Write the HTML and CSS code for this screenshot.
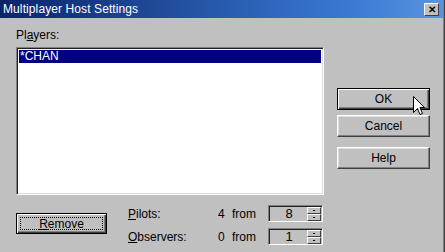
FILE: index.html
```html
<!DOCTYPE html>
<html lang="en">

<head>
    <meta charset="UTF-8">
    <title>Multiplayer Host Settings</title>
    <link rel="stylesheet" href="styles.css">
</head>

<body>

    <div class="window">
        <!-- Title bar -->
        <div class="titlebar">
            <span class="title">Multiplayer Host Settings</span>
            <span class="close-btn">&#x2715;</span>
        </div>

        <div class="content">
            <div class="left">
                <div class="label">Pl<u>a</u>yers:</div>
                <div class="listbox">
                    <div class="list-item selected">*CHAN</div>
                </div>

                <div class="bottom-row">
                    <div class="remove-wrap">
                        <button class="btn remove-btn"><span class="focus"><u>R</u>emove</span></button>
                    </div>
                    <div class="counts">
                        <div class="count-row">
                            <span class="count-label"><u>P</u>ilots:</span>
                            <span class="count-num">4</span>
                            <span class="count-from">from</span>
                            <div class="spinner">
                                <span class="spin-value">8</span>
                                <div class="spin-arrows">
                                    <span class="arrow"></span>
                                    <span class="arrow"></span>
                                </div>
                            </div>
                        </div>
                        <div class="count-row">
                            <span class="count-label"><u>O</u>bservers:</span>
                            <span class="count-num">0</span>
                            <span class="count-from">from</span>
                            <div class="spinner">
                                <span class="spin-value">1</span>
                                <div class="spin-arrows">
                                    <span class="arrow"></span>
                                    <span class="arrow"></span>
                                </div>
                            </div>
                        </div>
                    </div>
                </div>
            </div>

            <div class="right">
                <button class="btn default-btn">OK</button>
                <button class="btn">Cancel</button>
                <button class="btn help-btn">Help</button>
            </div>
        </div>

        <!-- Mouse pointer over OK -->
        <svg class="cursor" width="12" height="20" viewBox="0 0 12 20">
            <path d="M0.5 0.5 L0.5 16.5 L4.5 12.5 L7 18.5 L9.5 17.5 L7 11.5 L11.5 11.5 Z" fill="#fff" stroke="#000" stroke-width="1" />
        </svg>
    </div>

</body>

</html>
```

FILE: styles.css
```css
/* General Styling */
* {
    box-sizing: border-box;
}

body {
    margin: 0;
    padding: 0;
    font-family: 'Liberation Sans', Arial, sans-serif;
    font-size: 12px;
    color: #000;
    background: #c0c0c0;
}

.window {
    position: relative;
    width: 445px;
    height: 252px;
    background-color: #c0c0c0;
    border-right: 1px solid #404040;
    box-shadow: inset -1px 0 0 #808080;
    overflow: hidden;
}

/* Title bar */
.titlebar {
    height: 18px;
    display: flex;
    align-items: center;
    justify-content: space-between;
    padding: 0 3px 0 3px;
    background: linear-gradient(90deg, #0a246a, #3a7bd5 80%, #5a94dc);
    margin-right: 1px;
}

.title {
    color: white;
    font-size: 12px;
    letter-spacing: 0.1px;
}

.close-btn {
    width: 15px;
    height: 13px;
    background: #c0c0c0;
    font-size: 10px;
    font-weight: bold;
    line-height: 12px;
    text-align: center;
    border-top: 1px solid #fff;
    border-left: 1px solid #fff;
    border-right: 1px solid #404040;
    border-bottom: 1px solid #404040;
    margin-right: 1px;
}

/* Content */
.content {
    display: flex;
}

.left {
    margin-left: 16px;
    width: 308px;
}

.label {
    margin-top: 10px;
    height: 19px;
    line-height: 14px;
}

.listbox {
    height: 148px;
    background: white;
    border-top: 1px solid #808080;
    border-left: 1px solid #808080;
    border-right: 1px solid #fff;
    border-bottom: 1px solid #fff;
    box-shadow: inset 1px 1px 0 #202020, inset -1px -1px 0 #dfdfdf;
    padding: 2px;
}

.list-item {
    height: 13px;
    line-height: 13px;
    padding-left: 1px;
}

.list-item.selected {
    background-color: #000080;
    color: white;
}

/* Bottom row */
.bottom-row {
    display: flex;
    margin-top: 10px;
}

.remove-wrap {
    width: 112px;
    padding-top: 8px;
}

.btn {
    font-family: inherit;
    font-size: 12px;
    color: #000;
    background: #c0c0c0;
    border-top: 1px solid #fff;
    border-left: 1px solid #fff;
    border-right: 1px solid #404040;
    border-bottom: 1px solid #404040;
    box-shadow: inset -1px -1px 0 #808080, inset 1px 1px 0 #dfdfdf;
    padding: 0;
    height: 21px;
}

.remove-btn {
    width: 91px;
    border: 1px solid #000;
    box-shadow: inset 1px 1px 0 #fff, inset -1px -1px 0 #404040, inset -2px -2px 0 #808080;
    padding: 3px;
}

.remove-btn .focus {
    display: block;
    height: 13px;
    line-height: 12px;
    border: 1px dotted #000;
}

.counts {
    display: flex;
    flex-direction: column;
    gap: 6px;
}

.count-row {
    display: flex;
    align-items: center;
    height: 17px;
}

.count-label {
    width: 90px;
}

.count-num {
    width: 14px;
}

.count-from {
    width: 36px;
}

.spinner {
    display: flex;
    align-items: center;
    width: 55px;
    height: 17px;
    background: #c0c0c0;
    border-top: 1px solid #808080;
    border-left: 1px solid #808080;
    border-right: 1px solid #fff;
    border-bottom: 1px solid #fff;
    box-shadow: inset 1px 1px 0 #202020;
}

.spin-value {
    flex: 1;
    text-align: center;
    font-size: 13px;
    padding-left: 2px;
}

.spin-arrows {
    display: flex;
    flex-direction: column;
    width: 14px;
    margin-right: 1px;
}

.arrow {
    position: relative;
    height: 7px;
    background: #c0c0c0;
    border-top: 1px solid #fff;
    border-left: 1px solid #fff;
    border-right: 1px solid #404040;
    border-bottom: 1px solid #404040;
}

.arrow::after {
    content: '';
    position: absolute;
    left: 5px;
    top: 2px;
    width: 2px;
    height: 1px;
    background: #000;
}

/* Right column buttons */
.right {
    display: flex;
    flex-direction: column;
    margin-left: 13px;
    padding-top: 70px;
    gap: 5px;
}

.right .btn {
    width: 93px;
    height: 22px;
}

.default-btn {
    border: 1px solid #000;
    box-shadow: inset 1px 1px 0 #fff, inset -1px -1px 0 #404040, inset -2px -2px 0 #808080;
}

.help-btn {
    margin-top: 5px;
}

/* Mouse pointer */
.cursor {
    position: absolute;
    left: 413px;
    top: 96px;
}
```
